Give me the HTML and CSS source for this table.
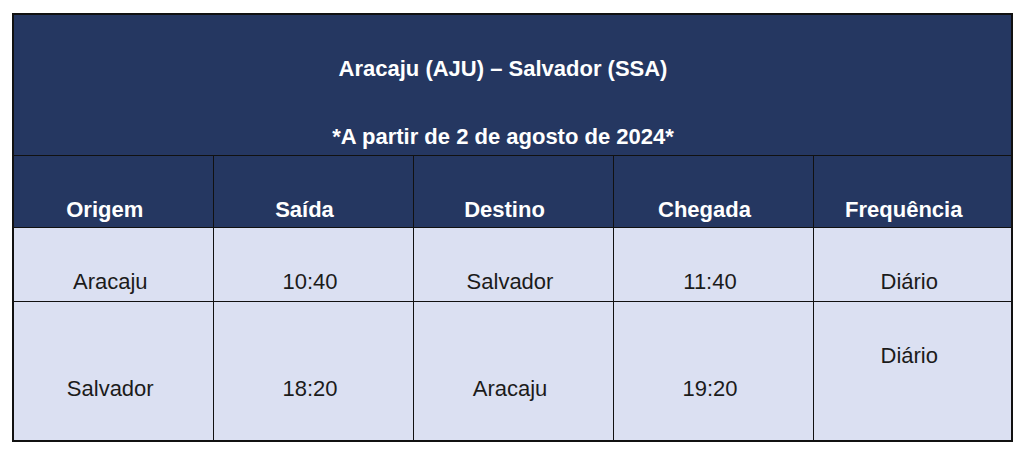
FILE: index.html
```html
<!DOCTYPE html>
<html lang="pt">
<head>
<meta charset="utf-8">
<title>Aracaju – Salvador</title>
<link rel="stylesheet" href="styles.css">
</head>
<body>
<table class="schedule">
  <colgroup>
    <col class="c"><col class="c"><col class="c"><col class="c"><col class="c-last">
  </colgroup>
  <thead>
    <tr class="title-row">
      <th colspan="5" class="title">
        <p class="title-line">Aracaju (AJU) – Salvador (SSA)</p>
        <p class="title-line second">*A partir de 2 de agosto de 2024*</p>
      </th>
    </tr>
    <tr class="head-row">
      <th>Origem</th>
      <th>Saída</th>
      <th>Destino</th>
      <th>Chegada</th>
      <th>Frequência</th>
    </tr>
  </thead>
  <tbody>
    <tr class="row-1">
      <td>Aracaju</td>
      <td>10:40</td>
      <td>Salvador</td>
      <td>11:40</td>
      <td>Diário</td>
    </tr>
    <tr class="row-2">
      <td>Salvador</td>
      <td>18:20</td>
      <td>Aracaju</td>
      <td>19:20</td>
      <td class="freq-top">Diário</td>
    </tr>
  </tbody>
</table>
</body>
</html>
```
FILE: styles.css
```css
html, body {
  margin: 0;
  padding: 0;
  background: #ffffff;
}

body {
  font-family: "Liberation Sans", Arial, sans-serif;
  font-size: 22px;
  line-height: 25px;
}

.schedule {
  margin: 13px 0 0 12px;
  width: 999px;
  border-collapse: collapse;
  table-layout: fixed;
  border: 2px solid #111111;
}

.c { width: 200px; }
.c-last { width: 199px; }

.schedule th,
.schedule td {
  border: 1px solid #111111;
  text-align: center;
  vertical-align: bottom;
}

.schedule th {
  background: #253761;
  color: #ffffff;
  font-weight: bold;
  padding: 0 17px 5px 0;
}

.schedule td {
  background: #dbe0f2;
  color: #1b1b1b;
  padding: 0 6px 6.5px 0;
}

.title-row { height: 141px; }

.schedule th.title {
  padding: 0 19px 6px 0;
}

.title-line {
  margin: 0;
}

.title-line.second {
  margin-top: 43px;
}

.head-row { height: 72px; }
.row-1 { height: 74px; }
.row-2 { height: 140px; }

.schedule .row-2 td { padding-bottom: 39px; }

.schedule .row-2 td.freq-top {
  vertical-align: top;
  padding-top: 41px;
  padding-bottom: 0;
}
```
